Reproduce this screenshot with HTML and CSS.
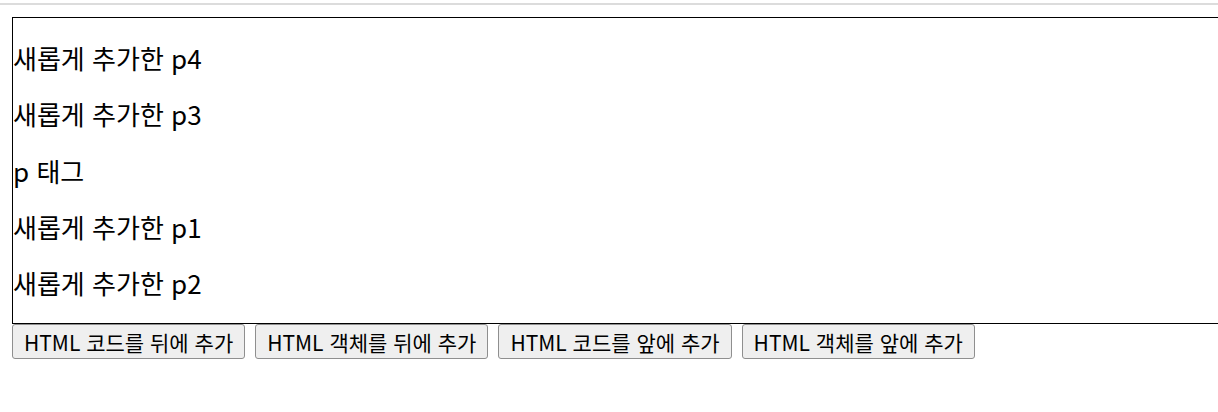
FILE: index.html
```html
<!DOCTYPE html>
<html lang="ko">
<head>
  <meta charset="UTF-8">
  <title>insertAdjacent 테스트</title>
  <link rel="stylesheet" href="styles.css">
</head>
<body>
  <div class="topline"></div>

  <div class="page">
    <div class="box" id="box">
      <p>새롭게 추가한 p4</p>
      <p>새롭게 추가한 p3</p>
      <p>p 태그</p>
      <p>새롭게 추가한 p1</p>
      <p>새롭게 추가한 p2</p>
    </div>

    <div class="buttons">
      <button type="button">HTML 코드를 뒤에 추가</button>
      <button type="button">HTML 객체를 뒤에 추가</button>
      <button type="button">HTML 코드를 앞에 추가</button>
      <button type="button">HTML 객체를 앞에 추가</button>
    </div>
  </div>
</body>
</html>
```

FILE: styles.css
```css
body {
  margin: 0;
  padding: 0;
  overflow: hidden;
  font-family: "Noto Sans CJK KR", "Noto Sans", sans-serif;
  color: #000;
  background: #fff;
}

.topline {
  height: 2px;
  margin-top: 3px;
  background-color: #dcdcdc;
}

.page {
  padding: 12px 0 0 12px;
}

/* the box runs past the right edge of the window */
.box {
  width: 1220px;
  height: 293px;
  border: 1px solid #000;
  padding: 12px 0 0 0;
}

.box p {
  margin: 0;
  font-size: 26px;
  line-height: 56.25px;
}

.buttons {
  display: flex;
  gap: 10px;
}

.buttons button {
  height: 35px;
  padding: 0 11px;
  font-family: inherit;
  font-size: 21px;
  color: #000;
  background-color: #efefef;
  border: 1px solid #8f8f8f;
  border-radius: 3px;
}
```
